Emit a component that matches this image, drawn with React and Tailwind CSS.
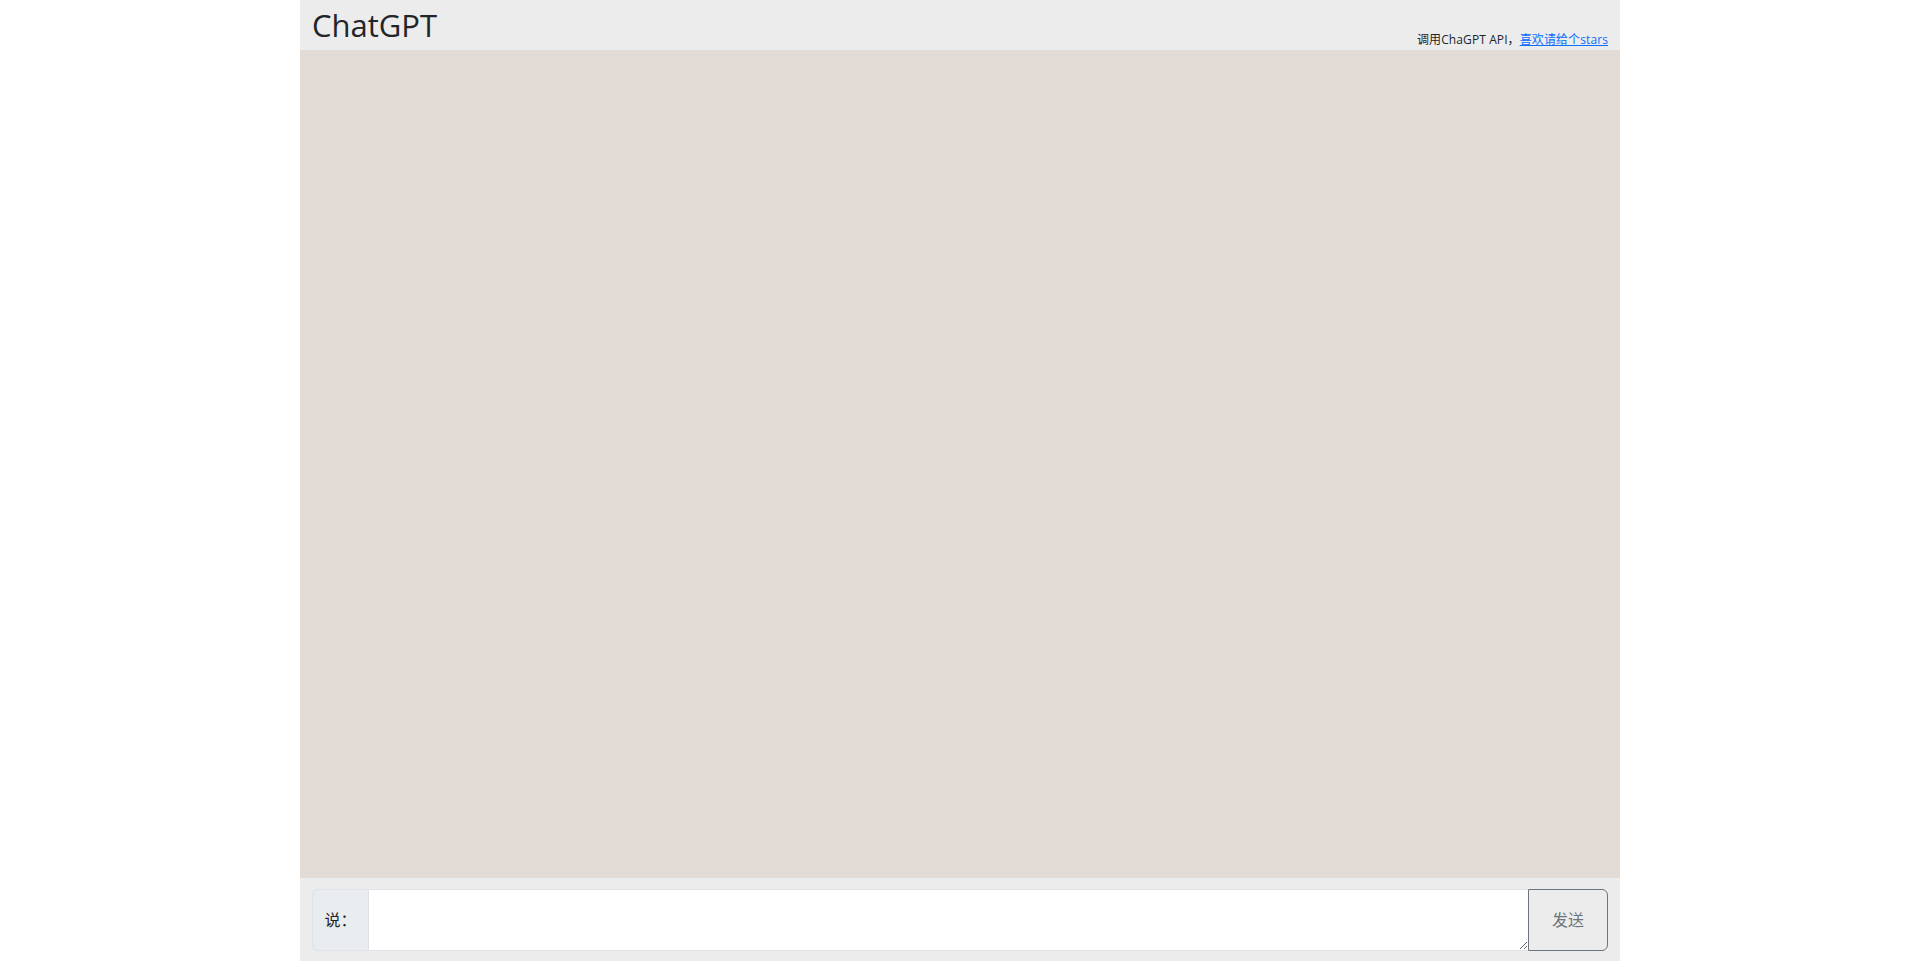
export default function App() {
  const font = { fontFamily: '"Open Sans", "Noto Sans CJK SC", sans-serif' };
  return (
    <div className="w-full h-screen bg-white" style={font}>
      <div className="mx-auto w-[1320px] h-full flex flex-col bg-[#ececec]">
        <div className="h-[50px] flex justify-between px-3 shrink-0">
          <div className="text-[31px] leading-[38px] mt-[6px] text-[#212529]">ChatGPT</div>
          <div className="self-end pb-[1px] text-[12px] leading-[18px] tracking-[0.1px] text-[#212529]">
            调用ChaGPT API，<a href="#" className="text-[#0d6efd] underline">喜欢请给个stars</a>
          </div>
        </div>
        <div className="flex-1 bg-[#e3dcd6]"></div>
        <div className="h-[83px] shrink-0 px-3 py-[11px] flex">
          <div className="flex w-full h-[62px]">
            <div className="w-[57px] shrink-0 flex items-center justify-center bg-[#e9ecef] border border-[#dee2e6] rounded-l-[6px] text-[16px] text-[#212529]">说：</div>
            <textarea rows={2} className="flex-1 -ml-px bg-white border border-[#dee2e6] px-3 py-[6px] text-[16px] leading-[24px] outline-none resize-y"></textarea>
            <button className="w-[80px] shrink-0 -ml-px border border-[#6c757d] rounded-r-[6px] text-[16px] text-[#6c757d] bg-transparent">发送</button>
          </div>
        </div>
      </div>
    </div>
  );
}
